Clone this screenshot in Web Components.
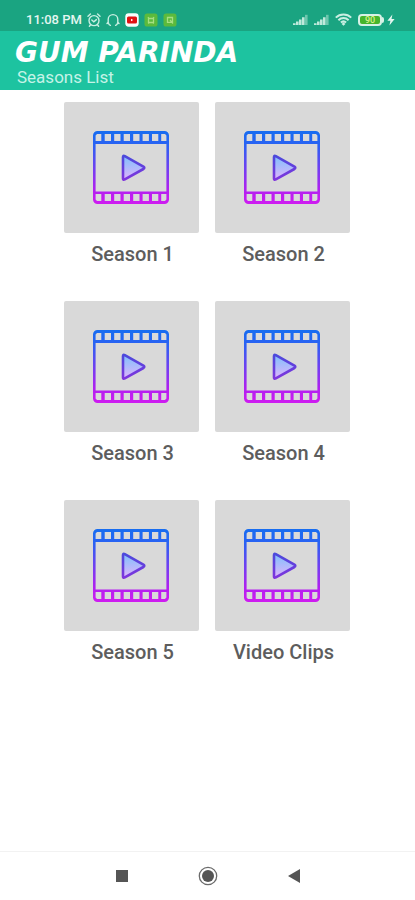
<!DOCTYPE html>
<html lang="en">
<head>
<meta charset="utf-8">
<meta name="viewport" content="width=device-width, initial-scale=1">
<title>Gum Parinda</title>
<style>
  html, body { margin: 0; min-height: 100%; }
  body { font-family: Roboto, "Liberation Sans", sans-serif; background: #fff; }
</style>
</head>
<body>
<seasons-app></seasons-app>

<script>
const define = (name, html) => {
  const template = document.createElement('template');
  template.innerHTML = html;
  customElements.define(name, class extends HTMLElement {
    constructor() {
      super();
      this.attachShadow({ mode: 'open' }).append(template.content.cloneNode(true));
    }
  });
};

define('status-bar', `
<style>
  :host { display: flex; align-items: center; justify-content: space-between; height: 31px; box-sizing: border-box;
    padding: 8px 20px 0 26px; background: #1aa481; color: #e4f6f0; font-size: 13px; font-weight: 500; line-height: 16px; }
  .group { display: flex; align-items: center; gap: 5px; }
  .right { gap: 6px; }
  time { white-space: nowrap; }
  svg { display: block; flex: none; }
  .battery { display: flex; align-items: center; }
  .level { box-sizing: border-box; width: 24px; height: 12px; border: 2px solid #d7f2e6; border-radius: 4px;
    background: #46b52c; color: #d6f08c; font-size: 9px; line-height: 8px; text-align: center; }
  .tip { width: 2px; height: 6px; background: #d7f2e6; border-radius: 0 2px 2px 0; margin-right: 3px; }
</style>
<div class="group">
  <time>11:08 PM</time>
  <svg width="14" height="14" viewBox="0 0 14 14" fill="none" stroke="#c9efe2" stroke-width="1.4" stroke-linecap="round"><circle cx="7" cy="7.6" r="5"/><path d="M1 3.2 3.4 1M13 3.2 10.6 1M4.8 7l2 1.8 2.6-2.2M3.4 12l-1 1.2M10.6 12l1 1.2"/></svg>
  <svg width="14" height="14" viewBox="0 0 14 14" fill="none" stroke="#c9efe2" stroke-width="1.4" stroke-linecap="round"><path d="M2.2 9.5V6.4a4.8 4.8 0 0 1 9.6 0v3.1M2.2 9.3l-1.2 1.2M2.2 9.3c.3 1.4.9 2.6 2.2 3M11.8 9.3l1.2 1.2M11.8 9.3c-.3 1.4-.9 2.6-2.2 3"/></svg>
  <svg width="14" height="14" viewBox="0 0 14 14"><rect x=".3" y=".3" width="13.4" height="13.4" rx="3.4" fill="#f7fffc"/><rect x="2" y="3.4" width="10" height="7.2" rx="1.5" fill="#e01212"/><path d="m6 5.7 2.2 1.3-2.2 1.3z" fill="#fff"/></svg>
  <svg width="14" height="14" viewBox="0 0 14 14"><rect x=".5" y=".5" width="13" height="13" rx="2.6" fill="#5cba3c"/><path d="M4.5 5.5h5v4h-5zM4 4l1 1.5M10 4 9 5.5M4.2 10.5l1-1M9.8 10.5l-1-1" fill="none" stroke="#a5df82" stroke-width="1.3"/></svg>
  <svg width="14" height="14" viewBox="0 0 14 14"><rect x=".5" y=".5" width="13" height="13" rx="2.6" fill="#5cba3c"/><path d="M4.5 4.5h5v4.8h-5zM7 7l3 3.5" fill="none" stroke="#a5df82" stroke-width="1.3"/></svg>
</div>
<div class="group right">
  <svg width="15" height="12" viewBox="0 0 15 12" fill="#bfe9db"><path d="M0 11h2.6V9.2H0zM3 11h2.6V7.4H3zM6 11h2.6V5.4H6zM9 11h2.6V3.2H9z"/><path d="M12 11h2.6V.8H12z" opacity=".5"/></svg>
  <svg width="15" height="12" viewBox="0 0 15 12" fill="#bfe9db"><path d="M0 11h2.6V9.2H0zM3 11h2.6V7.4H3zM6 11h2.6V5.4H6zM9 11h2.6V3.2H9z"/><path d="M12 11h2.6V.8H12z" opacity=".5"/></svg>
  <svg width="17" height="13" viewBox="0 0 17 13" fill="none" stroke="#c9efe2" stroke-width="2"><path d="M.8 4.6a11 11 0 0 1 15.4 0M3.4 7.2a7.3 7.3 0 0 1 10.2 0M5.9 9.6a3.8 3.8 0 0 1 5.2 0"/><path d="m8.5 9.2 1.9 1.7-1.9 1.9-1.9-1.9z" fill="#c9efe2" stroke="none"/></svg>
  <div class="battery"><span class="level">90</span><span class="tip"></span>
  <svg width="8" height="12" viewBox="0 0 8 12" fill="#e4f6f0"><path d="M5.4.6.4 6.8h3L2.4 11.6 7.6 5H4.5z"/></svg></div>
</div>`);

define('app-header', `
<style>
  :host { display: block; box-sizing: border-box; min-height: 59px; padding: 6px 15px 4px; background: #1dc3a0; color: #fff; }
  ::slotted(h1) { margin: 0; font: italic bold 28px/32px "DejaVu Sans", sans-serif; white-space: nowrap; }
  p { margin: 0 2px; font-size: 17px; line-height: 16px; color: #c5f3e7; }
</style>
<header><slot></slot><p><slot name="subtitle"></slot></p></header>`);

define('film-icon', `
<style>:host { display: block; } svg { display: block; }</style>
<svg width="76" height="73" viewBox="0 0 76 73" aria-hidden="true">
  <defs>
    <linearGradient id="frame" gradientUnits="userSpaceOnUse" x1="0" y1="0" x2="0" y2="73"><stop offset="0" stop-color="#176df0"/><stop offset=".2" stop-color="#2b61f3"/><stop offset=".8" stop-color="#b020f0"/><stop offset="1" stop-color="#cf1cf0"/></linearGradient>
    <linearGradient id="edge" x1="0" y1="0" x2="0" y2="1"><stop offset="0" stop-color="#4c49dc"/><stop offset="1" stop-color="#7f35dd"/></linearGradient>
    <linearGradient id="fill" x1="0" y1="0" x2="0" y2="1"><stop offset="0" stop-color="#7fc0fc"/><stop offset="1" stop-color="#e0b4fb"/></linearGradient>
  </defs>
  <path fill="url(#frame)" fill-rule="evenodd" d="M4.5 0h67A4.5 4.5 0 0 1 76 4.5v64a4.5 4.5 0 0 1-4.5 4.5h-67A4.5 4.5 0 0 1 0 68.5v-64A4.5 4.5 0 0 1 4.5 0zM2.6 13v47.5h70.8V13z
  M4 3H8.3v7H2.6V4.4zM11.7 3h6.3v7h-6.3zM21.2 3h6.3v7h-6.3zM30.7 3h6.3v7h-6.3zM40.2 3h6.3v7h-6.3zM49.6 3h6.3v7h-6.3zM59 3h6.3v7h-6.3zM68.2 3h3.8L73.4 4.4V10h-5.2z
  M2.6 63h5.7v7H4L2.6 68.6zM11.7 63h6.3v7h-6.3zM21.2 63h6.3v7h-6.3zM30.7 63h6.3v7h-6.3zM40.2 63h6.3v7h-6.3zM49.6 63h6.3v7h-6.3zM59 63h6.3v7h-6.3zM68.2 63h5.2v5.6L72 70h-3.8z"/>
  <path d="M30 26.2v21.2q0 2 1.8 1l18.6-10.4q1.8-1.2 0-2.4L31.8 25.2q-1.8-1-1.8 1z" fill="url(#fill)" stroke="url(#edge)" stroke-width="2.6" stroke-linejoin="round"/>
</svg>`);

define('season-card', `
<style>
  :host { display: block; }
  button { display: block; width: 100%; padding: 0; border: 0; background: none; font: inherit; color: #5d5d5d; cursor: pointer; }
  .thumb { display: grid; place-items: center; height: 131px; border-radius: 2px; background: #d9d9d9; }
  .label { display: block; padding: 9px 0 0 3px; font-size: 20px; font-weight: 500; line-height: 24px; white-space: nowrap; }
</style>
<button type="button"><span class="thumb"><film-icon></film-icon></span><span class="label"><slot></slot></span></button>`);

define('nav-bar', `
<style>
  :host { display: flex; justify-content: center; gap: 38px; border-top: 1px solid #f2f2f2; background: #fff; }
  button { display: grid; place-items: center; width: 48px; height: 48px; padding: 0; border: 0; background: none; }
  svg { display: block; }
</style>
<button type="button" aria-label="Recent apps"><svg width="12" height="12"><rect width="12" height="12" fill="#555"/></svg></button>
<button type="button" aria-label="Home"><svg width="20" height="20" viewBox="0 0 20 20"><circle cx="10" cy="10" r="8.7" fill="#fff" stroke="#6b6b6b" stroke-width="1.3"/><circle cx="10" cy="10" r="6" fill="#555"/></svg></button>
<button type="button" aria-label="Back"><svg width="12" height="14" viewBox="0 0 12 14"><path d="M12 0v14L0 7z" fill="#555"/></svg></button>`);

define('seasons-app', `
<style>
  :host { display: flex; flex-direction: column; min-height: 100vh; }
  main { flex: 1; display: grid; grid-template-columns: repeat(auto-fit, 135px); justify-content: center; align-content: start;
    gap: 35px 16px; padding: 12px 62px 12px 60px; }
</style>
<status-bar></status-bar>
<app-header><h1>GUM PARINDA</h1><span slot="subtitle">Seasons List</span></app-header>
<main>
  <season-card>Season 1</season-card>
  <season-card>Season 2</season-card>
  <season-card>Season 3</season-card>
  <season-card>Season 4</season-card>
  <season-card>Season 5</season-card>
  <season-card>Video Clips</season-card>
</main>
<nav-bar></nav-bar>`);
</script>
</body>
</html>
